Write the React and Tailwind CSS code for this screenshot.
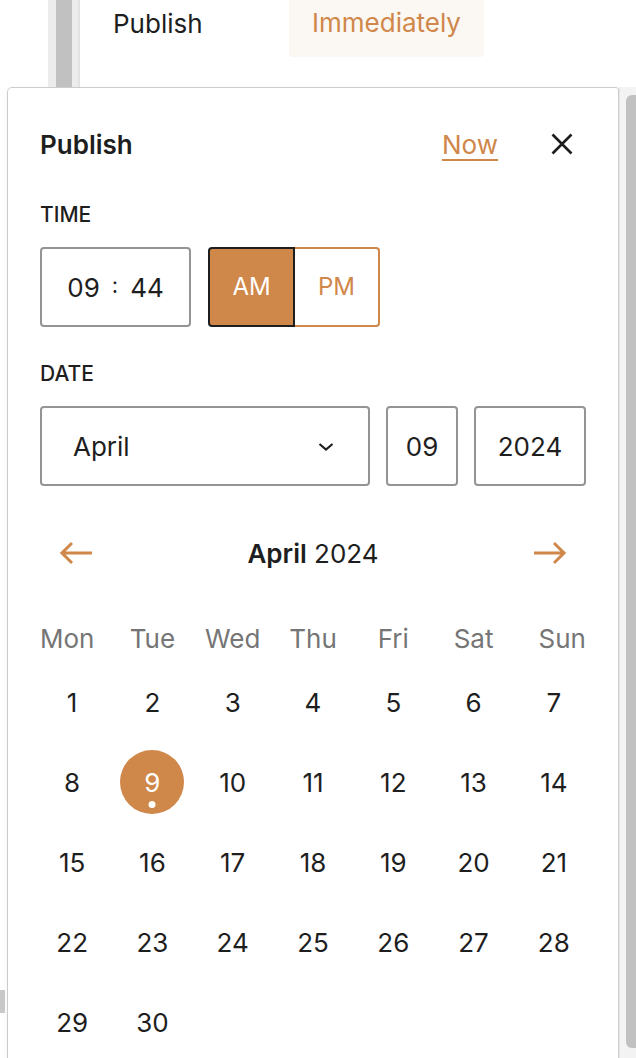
import React from 'react';

const weekdays = ['Mon', 'Tue', 'Wed', 'Thu', 'Fri', 'Sat', 'Sun'];
const days = Array.from({ length: 30 }, (_, i) => i + 1);

const CloseIcon = () => (
    <svg width="22" height="22" viewBox="0 0 22 22" fill="none" stroke="#1e1e1e" strokeWidth="2.6">
        <path d="M1.5 1.5 20.5 20.5M20.5 1.5 1.5 20.5" />
    </svg>
);

const ArrowLeft = () => (
    <svg width="48" height="48" viewBox="0 0 24 24" fill="#d0874a">
        <path d="M20 11.2H6.8l3.7-3.7-1-1L3.9 12l5.6 5.5 1-1-3.7-3.7H20z" />
    </svg>
);

const ArrowRight = () => (
    <svg width="48" height="48" viewBox="0 0 24 24" fill="#d0874a">
        <path d="m14.5 6.5-1 1 3.7 3.7H4v1.6h13.2l-3.7 3.7 1 1 5.6-5.5z" />
    </svg>
);

const Chevron = () => (
    <svg width="16" height="10" viewBox="0 0 16 10" fill="none" stroke="#1e1e1e" strokeWidth="2.2">
        <path d="M1.5 2 8 7.5 14.5 2" />
    </svg>
);

const App = () => {
    return (
        <div className="relative w-[636px] h-[1058px] overflow-hidden bg-white text-[#1e1e1e] font-['Inter',sans-serif]">
            {/* sidebar header behind the popover */}
            <div className="flex h-[87px]">
                <div className="ml-[48px] w-[32px] h-full bg-[#ececec] border-r-2 border-[#e2e2e2]">
                    <div className="ml-[8px] w-[16px] h-full bg-[#c1c1c1]" />
                </div>
                <div className="ml-[33px] w-[176px] h-[46px] flex items-center text-[26px]">Publish</div>
                <div className="-mt-[12px] w-[195px] h-[69px] rounded-b-[4px] bg-[#fbf7f3] flex items-center justify-center text-[26px] text-[#d0874a]">
                    Immediately
                </div>
            </div>

            {/* popover */}
            <div className="ml-[7px] w-[612px] border border-[#cccccc] rounded-tl-[5px] rounded-tr-[3px] px-[32px] pt-[32px] pb-[40px] shadow-[0_2px_6px_rgba(0,0,0,0.05)]">
                <div className="flex items-center h-[48px]">
                    <h2 className="text-[26px] font-semibold">Publish</h2>
                    <button className="ml-auto text-[26px] text-[#d0874a] underline decoration-2 underline-offset-[5px]">Now</button>
                    <button className="ml-[40px] w-[48px] h-[48px] flex items-center justify-center">
                        <CloseIcon />
                    </button>
                </div>

                <div className="mt-[31px] h-[32px] flex items-center text-[21px] font-medium uppercase">Time</div>
                <div className="mt-[16px] flex h-[80px]">
                    <div className="w-[151px] h-full border-2 border-[#949494] rounded-[4px] flex items-center justify-center gap-[12px] text-[26px]">
                        <span>09</span>
                        <span className="-mt-[3px] text-[22px]">:</span>
                        <span>44</span>
                    </div>
                    <div className="ml-[17px] flex h-full text-[24px]">
                        <button className="w-[87px] h-full bg-[#d0874a] border-2 border-[#1e1e1e] rounded-l-[4px] text-white">AM</button>
                        <button className="w-[85px] h-full border-2 border-l-0 border-[#d0874a] rounded-r-[4px] text-[#d0874a]">PM</button>
                    </div>
                </div>

                <div className="mt-[31px] h-[32px] flex items-center text-[21px] font-medium uppercase">Date</div>
                <div className="mt-[16px] flex gap-[16px] h-[80px] text-[26px]">
                    <div className="w-[330px] h-full border-2 border-[#949494] rounded-[4px] flex items-center pl-[31px] pr-[34px]">
                        <span>April</span>
                        <span className="ml-auto mt-[2px]"><Chevron /></span>
                    </div>
                    <div className="w-[72px] h-full border-2 border-[#949494] rounded-[4px] flex items-center justify-center">09</div>
                    <div className="w-[112px] h-full border-2 border-[#949494] rounded-[4px] flex items-center justify-center">2024</div>
                </div>

                <div className="mt-[35px] h-[64px] flex items-center justify-between">
                    <button className="w-[72px] h-[64px] flex items-center justify-center"><ArrowLeft /></button>
                    <div className="text-[26px]"><span className="font-semibold">April</span> 2024</div>
                    <button className="w-[72px] h-[64px] flex items-center justify-center"><ArrowRight /></button>
                </div>

                <div className="mt-[21px] -mx-[8px] grid grid-cols-7 h-[64px] items-center text-[26px] text-[#757575]">
                    {weekdays.map((d, i) => (
                        <div
                            key={d}
                            className={i === 0 ? 'justify-self-start ml-[8px]' : i === 6 ? 'justify-self-end mr-[8px]' : 'justify-self-center'}
                        >
                            {d}
                        </div>
                    ))}
                </div>

                <div className="-mx-[8px] grid grid-cols-7 gap-y-[16px] text-[26px]">
                    {days.map((d) => (
                        <div key={d} className="flex justify-center">
                            {d === 9 ? (
                                <div className="relative w-[64px] h-[64px] rounded-full bg-[#d0874a] text-white flex items-center justify-center">
                                    9
                                    <span className="absolute left-1/2 bottom-[6px] -translate-x-1/2 w-[7px] h-[7px] rounded-full bg-white" />
                                </div>
                            ) : (
                                <div className="w-[64px] h-[64px] flex items-center justify-center">{d}</div>
                            )}
                        </div>
                    ))}
                </div>
            </div>

            {/* page scrollbar */}
            <div className="absolute top-[87px] right-0 w-[17px] h-[971px] bg-[#f3f3f3] border-l border-[#e6e6e6] pt-[8px] pl-[6px]">
                <div className="w-[12px] h-[953px] rounded-l-[6px] bg-[#c1c1c1]" />
            </div>

            {/* edge of element behind the popover */}
            <div className="absolute left-0 top-[990px] w-[5px] h-[23px] bg-[#c8c8c8]" />
        </div>
    );
};

export default App;
